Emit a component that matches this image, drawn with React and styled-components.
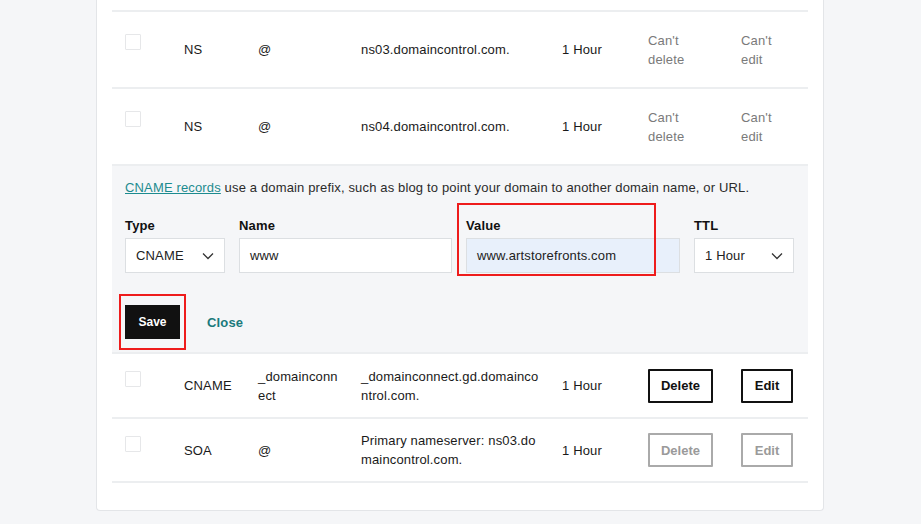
import styled, { createGlobalStyle } from "styled-components";

const GlobalStyle = createGlobalStyle`
  html, body {
    margin: 0;
    padding: 0;
    background: #f5f6f8;
    font-family: "Liberation Sans", Arial, sans-serif;
    letter-spacing: 0.15px;
    color: #111;
  }
`;

const Page = styled.div`
  width: 921px;
  height: 524px;
  overflow: hidden;
  display: flex;
  justify-content: flex-start;
  padding-left: 96px;
  box-sizing: border-box;
`;

const Card = styled.div`
  width: 728px;
  height: 511px;
  box-sizing: border-box;
  background: #fff;
  border: 1px solid #e3e5e8;
  border-top: none;
  border-radius: 0 0 4px 4px;
  padding: 10px 15px 0 15px;
`;

const Table = styled.div`
  display: flex;
  flex-direction: column;
  width: 696px;
  border-top: 2px solid #eceef0;
`;

const Row = styled.div`
  display: grid;
  grid-template-columns: 72px 74px 103px 201px 86px 93px 67px;
  align-items: center;
  height: ${(p) => p.$h}px;
  border-bottom: 2px solid #eceef0;
  box-sizing: border-box;
  font-size: 13px;
  line-height: 19px;
`;

const CheckCell = styled.div`
  padding-left: 13px;
  align-self: start;
  padding-top: ${(p) => p.$top}px;
`;

const Checkbox = styled.div`
  width: 14px;
  height: 14px;
  border: 1px solid #e6e7e9;
  border-radius: 1px;
`;

const Cell = styled.div`
  color: ${(p) => (p.$muted ? "#7a7a7a" : "#1a1a1a")};
  word-break: break-all;
  padding-right: ${(p) => p.$pr || 4}px;
`;

const ActionButton = styled.button`
  height: 34px;
  padding: 0;
  width: ${(p) => p.$w}px;
  background: #fff;
  border: 2px solid ${(p) => (p.$disabled ? "#aaa" : "#111")};
  color: ${(p) => (p.$disabled ? "#9a9a9a" : "#111")};
  font-family: inherit;
  font-size: 13px;
  font-weight: 700;
  border-radius: 1px;
`;

const FormPanel = styled.div`
  background: #f5f6f8;
  height: 188px;
  box-sizing: border-box;
  border-bottom: 2px solid #eceef0;
  padding: 13px 13px 0 13px;
`;

const Intro = styled.p`
  margin: 0;
  font-size: 13px;
  color: #2b2b2b;
  line-height: 17px;
`;

const Link = styled.a`
  color: #1c8b8f;
  text-decoration: underline;
`;

const FieldRow = styled.div`
  display: flex;
  gap: 14px;
  margin-top: 22px;
`;

const Field = styled.div`
  position: relative;
  width: ${(p) => p.$w}px;
  display: flex;
  flex-direction: column;
  gap: 5px;
`;

const Label = styled.label`
  font-size: 13px;
  font-weight: 700;
  color: #111;
  line-height: 15px;
`;

const InputBox = styled.div`
  height: 35px;
  box-sizing: border-box;
  border: 1px solid #dcdfe2;
  background: ${(p) => (p.$active ? "#e8f0fb" : "#fff")};
  display: flex;
  align-items: center;
  justify-content: space-between;
  padding: 0 10px 0 10px;
  font-size: 13px;
  color: #222;
`;

const Highlight = styled.div`
  position: absolute;
  border: 2px solid #ee1c1c;
  left: ${(p) => p.$l}px;
  top: ${(p) => p.$t}px;
  width: ${(p) => p.$w}px;
  height: ${(p) => p.$h}px;
  box-sizing: border-box;
  pointer-events: none;
`;

const ButtonRow = styled.div`
  display: flex;
  align-items: center;
  gap: 27px;
  margin-top: 32px;
`;

const SaveWrap = styled.div`
  position: relative;
`;

const SaveButton = styled.button`
  width: 55px;
  height: 34px;
  background: #111;
  color: #fff;
  border: none;
  font-family: inherit;
  font-weight: 700;
  font-size: 12px;
  padding: 0;
`;

const CloseButton = styled.button`
  background: none;
  border: none;
  padding: 0;
  color: #1a7a7c;
  font-family: inherit;
  font-weight: 700;
  font-size: 13px;
  letter-spacing: 0.15px;
`;

const Chevron = () => (
  <svg width="12" height="8" viewBox="0 0 12 8" fill="none">
    <path d="M1 1.5l5 5 5-5" stroke="#333" strokeWidth="1.3" />
  </svg>
);

const CantRow = ({ value }) => (
  <Row $h={77}>
    <CheckCell $top={22}>
      <Checkbox />
    </CheckCell>
    <Cell>NS</Cell>
    <Cell>@</Cell>
    <Cell>{value}</Cell>
    <Cell>1 Hour</Cell>
    <Cell $muted>
      Can't
      <br />
      delete
    </Cell>
    <Cell $muted>
      Can't
      <br />
      edit
    </Cell>
  </Row>
);

export default function App() {
  return (
    <>
      <GlobalStyle />
      <Page>
        <Card>
          <Table>
            <CantRow value="ns03.domaincontrol.com." />
            <CantRow value="ns04.domaincontrol.com." />
            <FormPanel>
              <Intro>
                <Link>CNAME records</Link> use a domain prefix, such as blog to
                point your domain to another domain name, or URL.
              </Intro>
              <FieldRow>
                <Field $w={100}>
                  <Label>Type</Label>
                  <InputBox>
                    CNAME
                    <Chevron />
                  </InputBox>
                </Field>
                <Field $w={213}>
                  <Label>Name</Label>
                  <InputBox>www</InputBox>
                </Field>
                <Field $w={214}>
                  <Highlight $l={-9} $t={-15} $w={199} $h={73} />
                  <Label>Value</Label>
                  <InputBox $active>www.artstorefronts.com</InputBox>
                </Field>
                <Field $w={100}>
                  <Label>TTL</Label>
                  <InputBox>
                    1 Hour
                    <Chevron />
                  </InputBox>
                </Field>
              </FieldRow>
              <ButtonRow>
                <SaveWrap>
                  <Highlight $l={-6} $t={-11} $w={67} $h={56} />
                  <SaveButton>Save</SaveButton>
                </SaveWrap>
                <CloseButton>Close</CloseButton>
              </ButtonRow>
            </FormPanel>
            <Row $h={65}>
              <CheckCell $top={17}>
                <Checkbox />
              </CheckCell>
              <Cell>CNAME</Cell>
              <Cell>
                _domainconn
                <br />
                ect
              </Cell>
              <Cell $pr={22}>_domainconnect.gd.domaincontrol.com.</Cell>
              <Cell>1 Hour</Cell>
              <div>
                <ActionButton $w={65}>Delete</ActionButton>
              </div>
              <div>
                <ActionButton $w={52}>Edit</ActionButton>
              </div>
            </Row>
            <Row $h={64}>
              <CheckCell $top={17}>
                <Checkbox />
              </CheckCell>
              <Cell>SOA</Cell>
              <Cell>@</Cell>
              <Cell $pr={22}>Primary nameserver: ns03.domaincontrol.com.</Cell>
              <Cell>1 Hour</Cell>
              <div>
                <ActionButton $w={65} $disabled>
                  Delete
                </ActionButton>
              </div>
              <div>
                <ActionButton $w={52} $disabled>
                  Edit
                </ActionButton>
              </div>
            </Row>
          </Table>
        </Card>
      </Page>
    </>
  );
}
